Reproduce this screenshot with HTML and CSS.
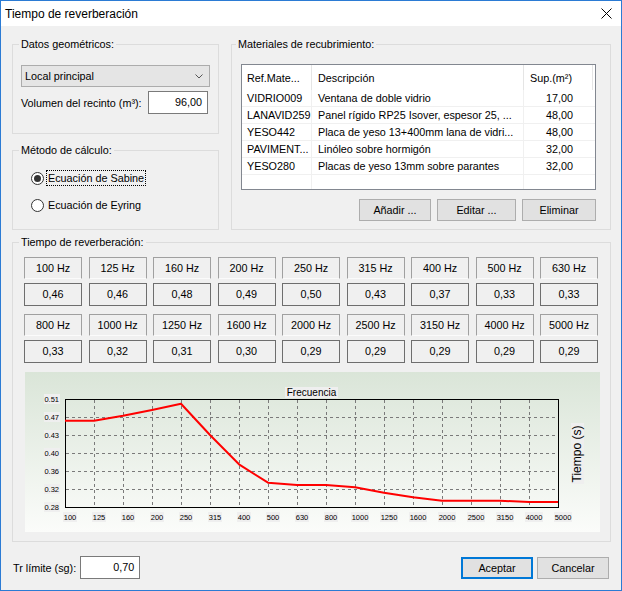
FILE: index.html
```html
<!DOCTYPE html>
<html lang="es">
<head>
<meta charset="utf-8">
<title>Tiempo de reverberación</title>
<link rel="stylesheet" href="styles.css">
</head>
<body>
<div class="window">
  <div class="titlebar">
    <span class="title">Tiempo de reverberación</span>
    <svg class="close" width="11" height="11" viewBox="0 0 11 11"><path d="M0.5 0.5L10.5 10.5M10.5 0.5L0.5 10.5" stroke="#000" stroke-width="1" fill="none"/></svg>
  </div>
  <div class="content">
    <div class="top">
      <div class="leftcol">
        <fieldset class="group geo">
          <legend>Datos geométricos:</legend>
          <div class="gbody">
            <div class="combo"><span>Local principal</span><svg width="8" height="5" viewBox="0 0 8 5"><polyline points="0.5,0.5 4,4 7.5,0.5" fill="none" stroke="#555" stroke-width="1"/></svg></div>
            <div class="field-row"><span>Volumen del recinto (m³):</span><div class="input">96,00</div></div>
          </div>
        </fieldset>
        <fieldset class="group method">
          <legend>Método de cálculo:</legend>
          <div class="gbody">
            <div class="radio checked"><span class="dot"></span><span class="rlabel focus">Ecuación de Sabine</span></div>
            <div class="radio"><span class="dot"></span><span class="rlabel">Ecuación de Eyring</span></div>
          </div>
        </fieldset>
      </div>
      <fieldset class="group materials">
        <legend>Materiales de recubrimiento:</legend>
        <div class="gbody">
          <div class="table">
            <div class="tr thead"><span>Ref.Mate...</span><span>Descripción</span><span>Sup.(m²)</span></div>
            <div class="tr"><span>VIDRIO009</span><span>Ventana de doble vidrio</span><span>17,00</span></div>
            <div class="tr"><span>LANAVID259</span><span>Panel rígido RP25 Isover, espesor 25, ...</span><span>48,00</span></div>
            <div class="tr"><span>YESO442</span><span>Placa de yeso 13+400mm lana de vidri...</span><span>48,00</span></div>
            <div class="tr"><span>PAVIMENT...</span><span>Linóleo sobre hormigón</span><span>32,00</span></div>
            <div class="tr"><span>YESO280</span><span>Placas de yeso 13mm sobre parantes</span><span>32,00</span></div>
            <div class="tr"><span></span><span></span><span></span></div>
          </div>
          <div class="buttons">
            <div class="btn b-add">Añadir ...</div>
            <div class="btn b-edit">Editar ...</div>
            <div class="btn b-del">Eliminar</div>
          </div>
        </div>
      </fieldset>
    </div>

    <fieldset class="group reverb">
      <legend>Tiempo de reverberación:</legend>
      <div class="gbody">
        <div class="freqs">
          <div class="cell"><div class="fhead">100 Hz</div><div class="fval">0,46</div></div>
          <div class="cell"><div class="fhead">125 Hz</div><div class="fval">0,46</div></div>
          <div class="cell"><div class="fhead">160 Hz</div><div class="fval">0,48</div></div>
          <div class="cell"><div class="fhead">200 Hz</div><div class="fval">0,49</div></div>
          <div class="cell"><div class="fhead">250 Hz</div><div class="fval">0,50</div></div>
          <div class="cell"><div class="fhead">315 Hz</div><div class="fval">0,43</div></div>
          <div class="cell"><div class="fhead">400 Hz</div><div class="fval">0,37</div></div>
          <div class="cell"><div class="fhead">500 Hz</div><div class="fval">0,33</div></div>
          <div class="cell"><div class="fhead">630 Hz</div><div class="fval">0,33</div></div>
          <div class="cell"><div class="fhead">800 Hz</div><div class="fval">0,33</div></div>
          <div class="cell"><div class="fhead">1000 Hz</div><div class="fval">0,32</div></div>
          <div class="cell"><div class="fhead">1250 Hz</div><div class="fval">0,31</div></div>
          <div class="cell"><div class="fhead">1600 Hz</div><div class="fval">0,30</div></div>
          <div class="cell"><div class="fhead">2000 Hz</div><div class="fval">0,29</div></div>
          <div class="cell"><div class="fhead">2500 Hz</div><div class="fval">0,29</div></div>
          <div class="cell"><div class="fhead">3150 Hz</div><div class="fval">0,29</div></div>
          <div class="cell"><div class="fhead">4000 Hz</div><div class="fval">0,29</div></div>
          <div class="cell"><div class="fhead">5000 Hz</div><div class="fval">0,29</div></div>
        </div>
        <div class="chart">
          <svg width="575" height="160" viewBox="0 0 575 160">
            <defs>
              <linearGradient id="bg" x1="0" y1="0" x2="0" y2="1">
                <stop offset="0" stop-color="#dae5d8"/>
                <stop offset="1" stop-color="#fbfcfa"/>
              </linearGradient>
            </defs>
            <rect x="0" y="0" width="575" height="160" fill="url(#bg)"/>
            <g stroke="#7a7a7a" stroke-width="1" stroke-dasharray="3 3">
              <line x1="69.5" y1="28" x2="69.5" y2="135"/>
              <line x1="98.5" y1="28" x2="98.5" y2="135"/>
              <line x1="127.5" y1="28" x2="127.5" y2="135"/>
              <line x1="156.5" y1="28" x2="156.5" y2="135"/>
              <line x1="185.5" y1="28" x2="185.5" y2="135"/>
              <line x1="214.5" y1="28" x2="214.5" y2="135"/>
              <line x1="243.5" y1="28" x2="243.5" y2="135"/>
              <line x1="272.5" y1="28" x2="272.5" y2="135"/>
              <line x1="301.5" y1="28" x2="301.5" y2="135"/>
              <line x1="330.5" y1="28" x2="330.5" y2="135"/>
              <line x1="359.5" y1="28" x2="359.5" y2="135"/>
              <line x1="388.5" y1="28" x2="388.5" y2="135"/>
              <line x1="417.5" y1="28" x2="417.5" y2="135"/>
              <line x1="446.5" y1="28" x2="446.5" y2="135"/>
              <line x1="475.5" y1="28" x2="475.5" y2="135"/>
              <line x1="504.5" y1="28" x2="504.5" y2="135"/>
              <line x1="41" y1="45.5" x2="533" y2="45.5"/>
              <line x1="41" y1="63.5" x2="533" y2="63.5"/>
              <line x1="41" y1="81.5" x2="533" y2="81.5"/>
              <line x1="41" y1="99.5" x2="533" y2="99.5"/>
              <line x1="41" y1="117.5" x2="533" y2="117.5"/>
            </g>
            <rect x="40.5" y="27.5" width="493" height="108" fill="none" stroke="#000" stroke-width="1"/>
            <g fill="#efefef">
              <rect x="19" y="22" width="16" height="10"/>
              <rect x="19" y="40" width="16" height="10"/>
              <rect x="19" y="58" width="16" height="10"/>
              <rect x="19" y="76" width="16" height="10"/>
              <rect x="19" y="94" width="16" height="10"/>
              <rect x="19" y="112" width="16" height="10"/>
              <rect x="19" y="130" width="16" height="10"/>
              <rect x="38" y="140" width="14" height="10"/>
              <rect x="67" y="140" width="14" height="10"/>
              <rect x="96" y="140" width="14" height="10"/>
              <rect x="125" y="140" width="14" height="10"/>
              <rect x="154" y="140" width="14" height="10"/>
              <rect x="183" y="140" width="14" height="10"/>
              <rect x="212" y="140" width="14" height="10"/>
              <rect x="241" y="140" width="14" height="10"/>
              <rect x="270" y="140" width="14" height="10"/>
              <rect x="299" y="140" width="14" height="10"/>
              <rect x="326" y="140" width="18" height="10"/>
              <rect x="355" y="140" width="18" height="10"/>
              <rect x="384" y="140" width="18" height="10"/>
              <rect x="413" y="140" width="18" height="10"/>
              <rect x="442" y="140" width="18" height="10"/>
              <rect x="471" y="140" width="18" height="10"/>
              <rect x="500" y="140" width="18" height="10"/>
              <rect x="529" y="140" width="18" height="10"/>
              <rect x="260" y="15" width="53" height="11"/>
              <rect x="546" y="51" width="13" height="61"/>
            </g>
            <g class="tick" text-anchor="end">
              <text x="34" y="29.7">0.51</text>
              <text x="34" y="47.7">0.47</text>
              <text x="34" y="65.7">0.43</text>
              <text x="34" y="83.7">0.40</text>
              <text x="34" y="101.7">0.36</text>
              <text x="34" y="119.7">0.32</text>
              <text x="34" y="137.7">0.28</text>
            </g>
            <g class="tick" text-anchor="middle">
              <text x="45" y="148">100</text>
              <text x="74" y="148">125</text>
              <text x="103" y="148">160</text>
              <text x="132" y="148">200</text>
              <text x="161" y="148">250</text>
              <text x="190" y="148">315</text>
              <text x="219" y="148">400</text>
              <text x="248" y="148">500</text>
              <text x="277" y="148">630</text>
              <text x="306" y="148">800</text>
              <text x="335" y="148">1000</text>
              <text x="364" y="148">1250</text>
              <text x="393" y="148">1600</text>
              <text x="422" y="148">2000</text>
              <text x="451" y="148">2500</text>
              <text x="480" y="148">3150</text>
              <text x="509" y="148">4000</text>
              <text x="538" y="148">5000</text>
            </g>
            <text class="ctitle" x="286.5" y="24" text-anchor="middle">Frecuencia</text>
            <text class="ylabel" x="552" y="86" text-anchor="middle" transform="rotate(-90 552 82)">Tiempo (s)</text>
            <polyline points="40,48.7 69,48.7 98,43.7 127,38 156,31.7 185,63 214,92.3 243,110.7 272,113 301,113 330,115.3 359,120.7 388,125.3 417,128.7 446,128.7 475,128.7 504,130 533,130" fill="none" stroke="#ff0000" stroke-width="2" stroke-linejoin="round"/>
          </svg>
        </div>
      </div>
    </fieldset>

    <div class="bottom">
      <span>Tr límite (sg):</span>
      <div class="input tr-input">0,70</div>
      <div class="btn accept">Aceptar</div>
      <div class="btn cancel">Cancelar</div>
    </div>
  </div>
</div>
</body>
</html>
```

FILE: styles.css
```css
* { box-sizing: border-box; }

body {
  margin: 0;
  font-family: "Liberation Sans", Arial, sans-serif;
  font-size: 10.8px;
  color: #000;
  background: #f0f0f0;
}

.window {
  width: 622px;
  height: 591px;
  border: 1px solid #2b7bd4;
  background: #f0f0f0;
  display: flex;
  flex-direction: column;
}

.titlebar {
  height: 25px;
  flex: none;
  background: #fff;
  display: flex;
  align-items: center;
  justify-content: space-between;
  padding: 0 9px 0 4px;
  font-size: 12px;
}

.close { display: block; }

.content {
  padding: 11px 10px 0 11px;
  display: flex;
  flex-direction: column;
}

.top {
  display: grid;
  grid-template-columns: 207px 1fr;
  column-gap: 12px;
}

.leftcol {
  display: flex;
  flex-direction: column;
  gap: 9px;
}

fieldset.group {
  margin: 0;
  padding: 0;
  border: 1px solid #dcdcdc;
  min-width: 0;
}

fieldset.group > legend {
  padding: 0 2px;
  margin-left: 6px;
  line-height: 14px;
  font-size: 10.8px;
}

fieldset.materials > legend { margin-left: 4px; }

/* Datos geométricos */
.geo .gbody {
  padding: 14px 8px 19px;
  display: flex;
  flex-direction: column;
  gap: 4px;
}

.combo {
  height: 22px;
  border: 1px solid #acacac;
  background: #e5e5e5;
  display: flex;
  align-items: center;
  justify-content: space-between;
  padding: 0 6px 0 3px;
}
.combo svg { display: block; }

.field-row {
  display: flex;
  align-items: center;
  height: 23px;
}

.input {
  width: 60px;
  height: 23px;
  border: 1px solid #7a7a7a;
  background: #fff;
  text-align: right;
  padding-right: 5px;
  line-height: 21px;
}

.field-row .input {
  margin-left: auto;
  margin-right: 2px;
}

/* Método */
.method .gbody {
  padding: 12px 8px 15px;
  display: flex;
  flex-direction: column;
  gap: 9px;
}

.radio {
  height: 18px;
  display: flex;
  align-items: center;
}

.dot {
  width: 13px;
  height: 13px;
  border: 1px solid #333;
  border-radius: 50%;
  background: #fff;
  margin-left: 10px;
  display: flex;
  align-items: center;
  justify-content: center;
}

.checked .dot::after {
  content: "";
  width: 7px;
  height: 7px;
  border-radius: 50%;
  background: #333;
}

.rlabel {
  margin-left: 2px;
  padding: 0 1px;
  border: 1px solid transparent;
  line-height: 14px;
}

.rlabel.focus { border: 1px dotted #000; }

/* Materiales */
.materials .gbody {
  padding: 13px 14px 8px 9px;
  display: flex;
  flex-direction: column;
  gap: 9px;
}

.table {
  height: 126px;
  border: 1px solid #828790;
  background: #fff;
  overflow: hidden;
}

.tr {
  display: grid;
  grid-template-columns: 70px 212px 72px;
  height: 17px;
}

.tr > span {
  border-right: 1px solid #f0f0f0;
  border-bottom: 1px solid #f0f0f0;
  padding-left: 6px;
  white-space: nowrap;
  overflow: hidden;
  line-height: 16px;
}

.tr > span:first-child { padding-left: 5px; }

.tr > span:last-child {
  border-right: none;
  text-align: right;
  padding-left: 0;
  padding-right: 23px;
}

.tr.thead { height: 25px; }

.tr.thead > span {
  border-bottom: none;
  border-right-color: #e5e5e5;
  line-height: 23px;
  padding-top: 2px;
}

.tr.thead > span:last-child {
  border-right: 1px solid #e5e5e5;
  margin-right: 3px;
  padding-right: 20px;
}

.buttons {
  display: flex;
  justify-content: flex-end;
  gap: 6px;
}

.btn {
  height: 22px;
  border: 1px solid #adadad;
  background: #e1e1e1;
  display: flex;
  align-items: center;
  justify-content: center;
}

.b-add { width: 72px; }
.b-edit { width: 79px; }
.b-del { width: 74px; }

/* Tiempo de reverberación */
fieldset.reverb { margin-top: 5px; }

.reverb .gbody {
  padding: 8px 10px 9px 11px;
}

.freqs {
  display: grid;
  grid-template-columns: repeat(9, 58px);
  column-gap: 6.5px;
  row-gap: 8px;
}

.cell {
  display: flex;
  flex-direction: column;
  gap: 4px;
}

.fhead {
  height: 22px;
  border: 1px solid #a0a0a0;
  border-bottom-color: #fbfbfb;
  text-align: center;
  line-height: 20px;
}

.fval {
  height: 23px;
  border: 1px solid #6e6e6e;
  text-align: center;
  line-height: 21px;
}

.chart {
  margin-top: 9px;
  margin-left: 1px;
  width: 575px;
  height: 160px;
}

.chart svg { display: block; }

.tick {
  font-family: "Liberation Sans", Arial, sans-serif;
  font-size: 7.5px;
  fill: #000;
}

.ctitle {
  font-family: "Liberation Sans", Arial, sans-serif;
  font-size: 10px;
  fill: #000;
}

.ylabel {
  font-family: "Liberation Sans", Arial, sans-serif;
  font-size: 12px;
  fill: #000;
}

/* Bottom row */
.bottom {
  margin-top: 14px;
  display: flex;
  align-items: center;
  gap: 4px;
  height: 23px;
}

.bottom span { margin-left: 1px; }

.bottom .btn { width: 72px; }

.bottom .accept {
  margin-left: auto;
  border: 2px solid #0078d7;
}

.cancel { margin-right: 2px; }
```
